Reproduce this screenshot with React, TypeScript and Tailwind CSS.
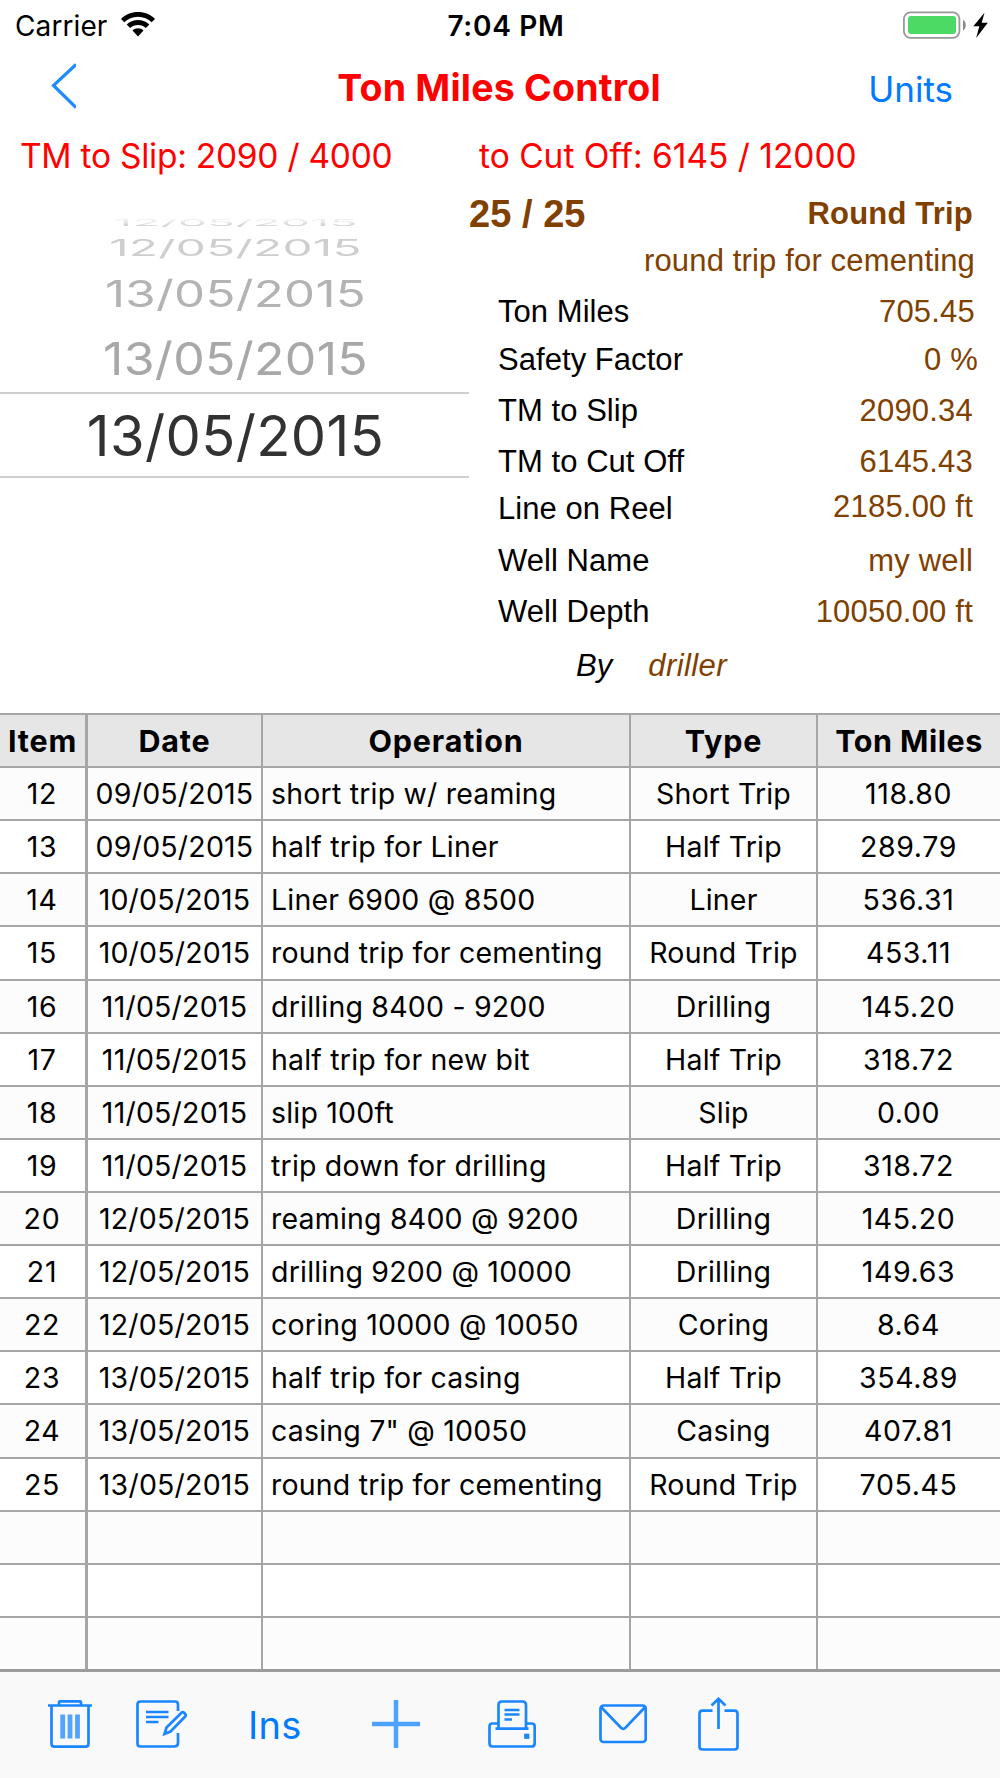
import type { ReactNode } from "react";

type Trip = {
  item: number;
  date: string;
  operation: string;
  type: string;
  tonMiles: string;
};

const trips: Trip[] = [
  { item: 12, date: "09/05/2015", operation: "short trip w/ reaming", type: "Short Trip", tonMiles: "118.80" },
  { item: 13, date: "09/05/2015", operation: "half trip for Liner", type: "Half Trip", tonMiles: "289.79" },
  { item: 14, date: "10/05/2015", operation: "Liner 6900 @ 8500", type: "Liner", tonMiles: "536.31" },
  { item: 15, date: "10/05/2015", operation: "round trip for cementing", type: "Round Trip", tonMiles: "453.11" },
  { item: 16, date: "11/05/2015", operation: "drilling 8400 - 9200", type: "Drilling", tonMiles: "145.20" },
  { item: 17, date: "11/05/2015", operation: "half trip for new bit", type: "Half Trip", tonMiles: "318.72" },
  { item: 18, date: "11/05/2015", operation: "slip 100ft", type: "Slip", tonMiles: "0.00" },
  { item: 19, date: "11/05/2015", operation: "trip down for drilling", type: "Half Trip", tonMiles: "318.72" },
  { item: 20, date: "12/05/2015", operation: "reaming 8400 @ 9200", type: "Drilling", tonMiles: "145.20" },
  { item: 21, date: "12/05/2015", operation: "drilling 9200 @ 10000", type: "Drilling", tonMiles: "149.63" },
  { item: 22, date: "12/05/2015", operation: "coring 10000 @ 10050", type: "Coring", tonMiles: "8.64" },
  { item: 23, date: "13/05/2015", operation: "half trip for casing", type: "Half Trip", tonMiles: "354.89" },
  { item: 24, date: "13/05/2015", operation: 'casing 7" @ 10050', type: "Casing", tonMiles: "407.81" },
  { item: 25, date: "13/05/2015", operation: "round trip for cementing", type: "Round Trip", tonMiles: "705.45" },
];

const EMPTY_ROWS = 3;

const details = [
  { label: "Ton Miles", value: "705.45", row: "h-[48px] pr-[25px]", shift: "" },
  { label: "Safety Factor", value: "0 %", row: "h-[51px] pr-[22px]", shift: "" },
  { label: "TM to Slip", value: "2090.34", row: "h-[51px] pr-[27px]", shift: "" },
  { label: "TM to Cut Off", value: "6145.43", row: "h-[47px] pr-[27px]", shift: "" },
  { label: "Line on Reel", value: "2185.00 ft", row: "h-[52px] pr-[27px]", shift: "-mt-[2px]" },
  { label: "Well Name", value: "my well", row: "h-[51px] pr-[27px]", shift: "" },
  { label: "Well Depth", value: "10050.00 ft", row: "h-[54px] pr-[27px]", shift: "" },
];

function StatusBar() {
  return (
    <div className="grid h-[50px] grid-cols-3 items-center text-[28px] leading-[50px]">
      <div className="flex items-center pl-[15px]">
        <span className="w-[106px] tracking-[0.100px]">Carrier</span>
        <svg width="34" height="25" viewBox="0 0 34 25" className="-mt-[2px]">
          <path d="M17 0C10.400 0 4.400 2.600 0 6.900L3.300 10.200C6.800 6.800 11.600 4.700 17 4.700S27.200 6.800 30.700 10.200L34 6.900C29.600 2.600 23.600 0 17 0Z" />
          <path d="M17 8.100C12.700 8.100 8.700 9.800 5.700 12.600L9.100 16C11.200 14.100 13.900 12.900 17 12.900S22.800 14.100 24.900 16L28.300 12.600C25.300 9.800 21.300 8.100 17 8.100Z" />
          <path d="M17 16.300C14.900 16.300 12.900 17.100 11.500 18.400L17 24.400L22.500 18.400C21.100 17.100 19.100 16.300 17 16.300Z" />
        </svg>
      </div>
      <div className="pt-[1px] pl-[12px] text-center font-semibold tracking-[0.700px]">7:04 PM</div>
      <svg width="86" height="28" viewBox="0 0 86 28" className="mr-[11px] -mt-[2px] justify-self-end">
        <rect x="0.900" y="1.400" width="55.500" height="25.400" rx="6.500" fill="none" stroke="#999" strokeWidth="1.800" />
        <rect x="5" y="5" width="48" height="18" rx="3" fill="#4cd964" />
        <path d="M60 8.800C63.700 10.800 63.700 17.600 60 19.600Z" fill="#8a8a8a" />
        <path d="M81.500 1.700L70.300 15.200H76.300L73.200 27L84.800 11.800H78.700Z" />
      </svg>
    </div>
  );
}

function NavBar() {
  return (
    <div className="grid h-[75px] grid-cols-3 items-center leading-[70px]">
      <svg width="26" height="46" viewBox="0 0 26 46" fill="none" stroke="#1f8bff" strokeWidth="3.200" className="ml-[50px] -mt-[3px]">
        <path d="M26 1.500L3.500 22.500L26 44.500" />
      </svg>
      <h1 className="-mr-3.5 -ml-4 pt-[1px] text-center text-[37.500px] font-bold tracking-[0.200px] whitespace-nowrap text-[#ff0000]">
        Ton Miles Control
      </h1>
      <button type="button" className="pt-[3px] pr-[47px] text-right text-[35px] text-[#007aff]">
        Units
      </button>
    </div>
  );
}

function Summary() {
  return (
    <div className="flex h-[62px] text-[33.500px] leading-[62px] whitespace-nowrap text-[#ff0000]">
      <div className="w-[479px] pl-[20px] tracking-[-0.250px]">TM to Slip: 2090 / 4000</div>
      <div>to Cut Off: 6145 / 12000</div>
    </div>
  );
}

function DateWheel() {
  return (
    <div className="w-[469px] text-center whitespace-nowrap">
      <div className="h-[205px] pt-[30px] pl-[2px] text-[50px] tracking-[0.300px] text-[#a8a8a8]">
        <div className="h-[16px]">
          <div className="-translate-y-[24px] scale-x-[0.925] scale-y-[0.180] bg-gradient-to-b from-[#ededed] from-35% to-[#cfcfcf] to-75% bg-clip-text leading-[60px] text-transparent">
            12/05/2015
          </div>
        </div>
        <div className="h-[30px] leading-[30px]">
          <div className="scale-x-[0.955] scale-y-[0.450] text-[#cecece]">12/05/2015</div>
        </div>
        <div className="h-[62px] leading-[62px]">
          <div className="scale-x-[0.985] scale-y-[0.740] text-[#b3b3b3]">13/05/2015</div>
        </div>
        <div className="h-[68px] leading-[68px]">
          <div className="scale-y-[0.910]">13/05/2015</div>
        </div>
      </div>
      <div className="h-[86px] border-y-2 border-[#cfcfcf] pl-[2px] text-[56px] leading-[84px] tracking-[0.400px] text-[#323232]">
        13/05/2015
      </div>
    </div>
  );
}

function TripDetails() {
  return (
    <div className="flex-1 pt-[1px] font-['Liberation_Sans',Arial,sans-serif] text-[31px] leading-[40px] tracking-[0.050px] whitespace-nowrap text-[#804000]">
      <div className="flex h-[53px] items-start justify-between pr-[27px] font-bold">
        <span className="text-[38px] leading-[52px]">25 / 25</span>
        <span className="pt-[6px] tracking-[0.200px]">Round Trip</span>
      </div>
      <div className="h-[51px] pr-[25px] text-right tracking-[0.150px]">round trip for cementing</div>
      {details.map((d) => (
        <div key={d.label} className={`flex items-start justify-between pl-[29px] ${d.row}`}>
          <span className="text-black">{d.label}</span>
          <span className={`tracking-[0.200px] ${d.shift}`}>{d.value}</span>
        </div>
      ))}
      <div className="flex gap-[36px] pl-[107px] italic">
        <span className="text-black">By</span>
        <span className="tracking-[0.400px]">driller</span>
      </div>
    </div>
  );
}

function Row({ className, children }: { className: string; children: ReactNode }) {
  return (
    <div className={`grid h-[53.110px] grid-cols-[88px_175px_368px_187px_182px] border-t-2 border-[#a6a6a6] leading-[51px] ${className}`}>
      {children}
    </div>
  );
}

const cell = "border-r-2 border-[#a6a6a6] text-center";

function TripTable() {
  return (
    <div className="h-[956px] text-[28.500px] tracking-[0.200px] whitespace-nowrap">
      <Row className="bg-[#e6e6e6] text-[30.500px] font-bold tracking-[0.800px]">
        <div className="border-r-3 border-[#a6a6a6] text-center">Item</div>
        <div className={cell}>Date</div>
        <div className={cell}>Operation</div>
        <div className={cell}>Type</div>
        <div className="text-center tracking-[0.500px]">Ton Miles</div>
      </Row>
      {trips.map((trip) => (
        <Row key={trip.item} className="even:bg-[#fcfcfc]">
          <div className="border-r-3 border-[#a6a6a6] pr-px text-center tracking-[0.700px]">{trip.item}</div>
          <div className={cell}>{trip.date}</div>
          <div className="border-r-2 border-[#a6a6a6] pl-[8px]">{trip.operation}</div>
          <div className={cell}>{trip.type}</div>
          <div className="pr-px text-center tracking-[0.600px]">{trip.tonMiles}</div>
        </Row>
      ))}
      {Array.from({ length: EMPTY_ROWS }, (_, i) => (
        <Row key={i} className="even:bg-[#fcfcfc]">
          <div className="border-r-3 border-[#a6a6a6]" />
          <div className={cell} />
          <div className={cell} />
          <div className={cell} />
          <div />
        </Row>
      ))}
    </div>
  );
}

function Toolbar() {
  return (
    <div className="h-[109px] border-t-3 border-[#9c9c9c] bg-[#f9f9f9]">
      <div className="flex h-[104px] items-center pl-[48px] text-[#1a86ff]">
        <svg width="44" height="48" viewBox="0 0 44 48" fill="none" stroke="currentColor" strokeWidth="2.700">
          <path d="M0 5.500H44M11 5V2.500C11 1.700 11.500 1.300 12.300 1.300H31.700C32.500 1.300 33 1.700 33 2.500V5M3.500 6V43.500C3.500 45.700 4.500 46.700 6.500 46.700H37.500C39.500 46.700 40.500 45.700 40.500 43.500V6" />
          <path d="M14.700 14.500V38.500M22 14.500V38.500M29.500 14.500V38.500" strokeWidth="4.800" opacity="0.750" />
        </svg>
        <svg width="51" height="48" viewBox="0 0 51 48" fill="none" stroke="currentColor" strokeWidth="2.700" className="ml-[44px]">
          <path d="M42 11V4.500C42 2.500 41 1.500 39 1.500H4.500C2.500 1.500 1.500 2.500 1.500 4.500V43.500C1.500 45.500 2.500 46.500 4.500 46.500H38C40.500 46.500 42 45.500 42 43V33" />
          <path d="M10 12H32.500M10 17H32.500M10 22H22.500" />
          <path d="M28.500 34L30.500 27.500L45.500 12.800C46.300 12 47.200 12 48 12.800L49.200 14C49.900 14.800 49.900 15.700 49.200 16.500L34.500 31.500Z" />
        </svg>
        <span className="ml-[61px] w-[124px] pt-[2px] text-[38px] leading-[48px] tracking-[0.300px] text-[#007aff]">Ins</span>
        <svg width="48" height="48" viewBox="0 0 48 48" stroke="#4da2ff" strokeWidth="4.500">
          <path d="M0 24H48M24 0V48" />
        </svg>
        <svg width="48" height="48" viewBox="0 0 48 48" fill="none" stroke="currentColor" strokeWidth="2.700" className="ml-[68px]">
          <path d="M10.500 23.500H4.500C2.500 23.500 1.500 24.500 1.500 26.500V43C1.500 45.500 2.500 46.500 4.500 46.500H43.500C45.500 46.500 46.700 45.500 46.700 43V26.500C46.700 24.500 45.500 23.500 43.500 23.500H38" />
          <path d="M10.500 28.500V5C10.500 2.500 11.700 1.500 14 1.500H34.500C36.700 1.500 38 2.500 38 5V28.500M7.500 28.700H40.500M16.500 10H31.500M16.500 14.500H31.500M16.500 19.500H24" />
          <rect x="37.500" y="35" width="2.500" height="2.500" />
        </svg>
        <svg width="48" height="40" viewBox="0 0 48 40" fill="none" stroke="currentColor" strokeWidth="2.700" className="ml-[63px]">
          <rect x="1.500" y="1.500" width="45.200" height="36.500" rx="3" />
          <path d="M2.500 3.500L22 23.800C23.300 25.200 25 25.200 26.300 23.800L45.700 3.500" />
        </svg>
        <svg width="41" height="54" viewBox="0 0 41 54" fill="none" stroke="currentColor" strokeWidth="2.700" className="ml-[51px]">
          <path d="M14.500 13.700H4.500C2.500 13.700 1.500 14.700 1.500 16.700V49.500C1.500 51.500 2.500 52.500 4.500 52.500H36.500C38.500 52.500 39.500 51.500 39.500 49.500V16.700C39.500 14.700 38.500 13.700 36.500 13.700H26.500" />
          <path d="M20.500 32V3M13.500 8.500L20.500 1.800L27.500 8.500" />
        </svg>
      </div>
    </div>
  );
}

export default function App() {
  return (
    <main className="h-[1778px] w-[1000px] overflow-hidden bg-white font-[Inter,'Liberation_Sans',sans-serif] text-black">
      <StatusBar />
      <NavBar />
      <Summary />
      <div className="flex h-[526px]">
        <DateWheel />
        <TripDetails />
      </div>
      <TripTable />
      <Toolbar />
    </main>
  );
}
